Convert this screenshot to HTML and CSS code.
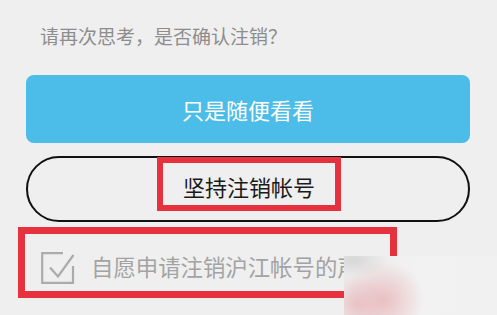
FILE: index.html
```html
<!DOCTYPE html>
<html lang="zh">
<head>
<meta charset="utf-8">
<link rel="stylesheet" href="styles.css">
</head>
<body>
<div class="page">
  <p class="prompt">请再次思考，是否确认注销？</p>
  <div class="btn-primary">只是随便看看</div>
  <div class="btn-outline"><span class="mark">坚持注销帐号</span></div>
  <div class="agree">
    <svg class="check" width="34" height="32" viewBox="0 0 34 32">
      <path d="M22 1.2 H1.2 V30.8 H32 V14" fill="none" stroke="#ababab" stroke-width="2.2"/>
      <path d="M9 15.5 L17 24.5 L32.5 3" fill="none" stroke="#ababab" stroke-width="2.2"/>
    </svg>
    <span class="agree-text">自愿申请注销沪江帐号的声明</span>
  </div>
</div>
<div class="watermark"></div>
</body>
</html>
```

FILE: styles.css
```css
html, body {
  margin: 0;
  padding: 0;
  background: #efefef;
  width: 497px;
  height: 315px;
  overflow: hidden;
  font-family: "Noto Sans CJK SC", "Noto Sans", sans-serif;
}

.page {
  display: flex;
  flex-direction: column;
  padding-top: 25px;
}

.prompt {
  margin: 0 0 0 40px;
  font-size: 19px;
  line-height: 22px;
  color: #8d8d8d;
}

.btn-primary {
  margin: 28px 27px 0 26px;
  height: 68px;
  border-radius: 8px;
  background: #4bbde8;
  color: #ffffff;
  font-size: 22px;
  display: flex;
  align-items: center;
  justify-content: center;
}

.btn-outline {
  margin: 13px 27px 0 26px;
  height: 66px;
  box-sizing: border-box;
  border: 2.5px solid #111111;
  border-radius: 33px;
  display: flex;
  justify-content: center;
  align-items: flex-start;
}

.mark {
  margin-top: -1.5px;
  margin-left: 2px;
  box-sizing: border-box;
  width: 184px;
  height: 54px;
  border: 6.5px solid #e6323f;
  padding-top: 6px;
  font-size: 22px;
  line-height: 34px;
  color: #1a1a1a;
  text-align: center;
}

.agree {
  margin: 5px 0 0 18px;
  width: 379px;
  height: 71px;
  box-sizing: border-box;
  border: 7px solid #e6323f;
  display: flex;
  align-items: flex-start;
  padding-left: 16px;
  gap: 16px;
}

.check {
  flex: none;
  margin-top: 18px;
}

.agree-text {
  margin-top: 19px;
  font-size: 22.4px;
  line-height: 26px;
  color: #a3a3a3;
  white-space: nowrap;
}

.watermark {
  position: absolute;
  left: 344px;
  top: 256px;
  width: 153px;
  height: 59px;
  background:
    radial-gradient(ellipse 40px 40px at 40px 44px, rgba(232, 176, 180, 0.75), rgba(232, 176, 180, 0) 100%),
    radial-gradient(ellipse 30px 30px at 12px 48px, rgba(234, 184, 188, 0.7), rgba(234, 184, 188, 0) 100%),
    radial-gradient(ellipse 34px 18px at 10px 4px, rgba(214, 214, 214, 0.95), rgba(214, 214, 214, 0) 100%),
    linear-gradient(to right, #ececec, #f2f2f2 50%, #f1f1f1);
}
```
